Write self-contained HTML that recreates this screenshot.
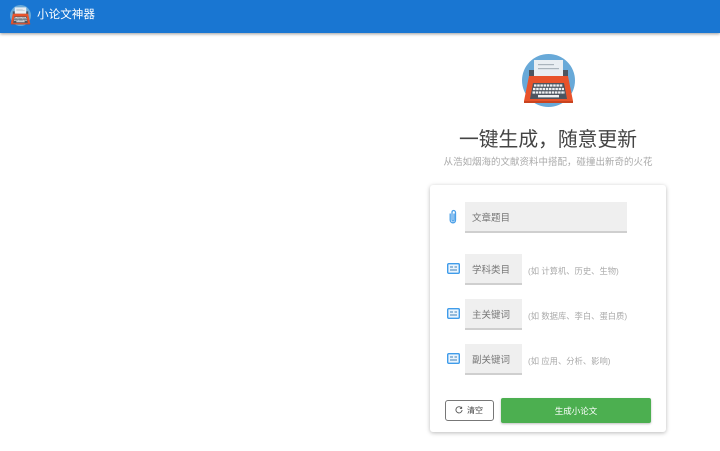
<!DOCTYPE html>
<html lang="zh"><head><meta charset="utf-8"><style>
html,body{margin:0;padding:0;width:720px;height:451px;overflow:hidden;background:#fff;font-family:"Liberation Sans","Noto Sans CJK SC",sans-serif}
.a{position:absolute;white-space:nowrap}
.f{position:absolute;background:#efefef;border-bottom:2px solid #cfcfcf;box-sizing:border-box;color:#777;font-size:9.500px;line-height:33px;padding-left:7px}
.h{position:absolute;left:528px;font-size:8.300px;line-height:12px;color:#aaa;white-space:nowrap}
</style></head><body>
<div class="a" style="left:0;top:0;width:720px;height:33px;background:#1976d2;box-shadow:0 1px 3px rgba(0,0,0,.4)"></div>
<svg class="a" style="left:10px;top:5px" width="21" height="21" viewBox="0 0 53 53"><use href="#tw"/></svg>
<div class="a" style="left:37px;top:7px;color:#fff;font-size:11.600px;line-height:16px">小论文神器</div>
<svg class="a" style="left:522px;top:54px" width="53" height="53" viewBox="0 0 53 53"><defs><g id="tw"><circle cx="26.500" cy="26.500" r="26.500" fill="#68a9d8"/><rect x="12" y="6" width="29" height="17" fill="#e9eef2"/><rect x="16" y="10" width="16" height="1.200" fill="#aab4bc"/><rect x="16" y="14" width="21" height="1.200" fill="#aab4bc"/><path d="M7 16H12V22H41V16H46V23H7Z" fill="#4c5560"/><path d="M7 22H46L51 47H2Z" fill="#e8532b"/><rect x="2" y="47" width="49" height="2" fill="#c9431f"/><path d="M11 29H42L45 45H8Z" fill="#4c5560"/><g stroke="#eef1f3" stroke-width="2.200" stroke-dasharray="2.500 .7" fill="none"><path d="M12 31.500H41"/><path d="M11 35H42"/><path d="M10.500 38.500H43"/></g><rect x="16" y="41" width="21" height="2.400" fill="#eef1f3"/></g></defs><use href="#tw"/></svg>
<div class="a" style="left:430px;width:236px;top:127px;text-align:center;font-size:19.800px;line-height:27px;color:#444">一键生成，随意更新</div>
<div class="a" style="left:430px;width:236px;top:156px;text-align:center;font-size:9.500px;line-height:14px;color:#aaa">从浩如烟海的文献资料中搭配，碰撞出新奇的火花</div>
<div class="a" style="left:430px;top:185px;width:236px;height:247px;background:#fff;border-radius:3px;box-shadow:0 1px 4px rgba(0,0,0,.28)"></div>
<svg class="a" style="left:447px;top:209px" width="12" height="15" viewBox="0 0 12 15" fill="none" stroke="#4a9fe8" stroke-width="1.300"><path d="M7 4.500V10.500C7 11.500 6.500 12 6 12S5 11.500 5 10.500V3.500C5 2.300 5.500 1.500 6.500 1.500S8.500 2.300 8.500 3.500V11C8.500 12.700 7.500 13.800 6 13.800S3.200 12.700 3.200 11V4.500"/></svg>
<div class="f" style="left:465px;top:202px;width:162px;height:31px">文章题目</div>
<div class="f" style="left:465px;top:254px;width:57px;height:31px">学科类目</div>
<div class="f" style="left:465px;top:299px;width:57px;height:31px">主关键词</div>
<div class="f" style="left:465px;top:344px;width:57px;height:31px">副关键词</div>
<svg class="a" style="left:447px;top:263px" width="13" height="11" viewBox="0 0 13 11"><use href="#ic"/></svg>
<svg class="a" style="left:447px;top:308px" width="13" height="11" viewBox="0 0 13 11"><defs><g id="ic"><rect x=".7" y=".7" width="11.600" height="9.600" rx="1" fill="#eaf4fd" stroke="#3f9cea" stroke-width="1.400"/><path d="M3 4H6M3 7H10M7.500 4H10" stroke="#3f7fb8" stroke-width="1"/></g></defs><use href="#ic"/></svg>
<svg class="a" style="left:447px;top:353px" width="13" height="11" viewBox="0 0 13 11"><use href="#ic"/></svg>
<div class="h" style="top:265px">(如 计算机、历史、生物)</div>
<div class="h" style="top:310px">(如 数据库、李白、蛋白质)</div>
<div class="h" style="top:355px">(如 应用、分析、影响)</div>
<div class="a" style="left:445px;top:400px;width:49px;height:21px;box-sizing:border-box;border:1px solid #777;border-radius:3px;background:#fff;font-size:8px;line-height:20px;color:#444;padding-left:21px">清空</div>
<svg class="a" style="left:455px;top:406px" width="8" height="8" viewBox="0 0 9 9" fill="none" stroke="#555" stroke-width="1"><path d="M7.500 2.500A3.500 3.500 0 1 0 8 4.500M7.500 .8V2.800H5.500"/></svg>
<div class="a" style="left:501px;top:398px;width:150px;height:25px;background:#4caf50;border-radius:2px;box-shadow:0 1px 2px rgba(0,0,0,.25);color:#fff;font-size:8.500px;line-height:26px;text-align:center">生成小论文</div>
</body></html>
